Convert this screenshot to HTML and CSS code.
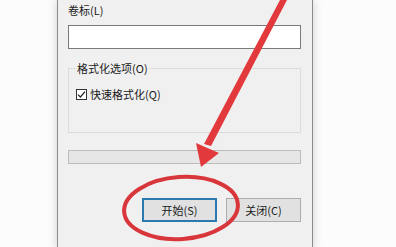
FILE: index.html
```html
<!DOCTYPE html>
<html lang="zh-CN">
<head>
    <meta charset="UTF-8">
    <title>格式化</title>
    <link rel="stylesheet" href="styles.css">
</head>
<body>

<div class="dialog">
    <div class="label">卷标(L)</div>
    <input class="field" type="text">

    <fieldset class="group">
        <legend>格式化选项(O)</legend>
        <label class="check">
            <span class="box">
                <svg width="9" height="9" viewBox="0 0 9 9"><path d="M1 4.6 L3.4 7 L8 1.6" fill="none" stroke="#222" stroke-width="1.2"/></svg>
            </span>
            快速格式化(Q)
        </label>
    </fieldset>

    <div class="progress"></div>

    <div class="buttons">
        <button class="btn default">开始(S)</button>
        <button class="btn">关闭(C)</button>
    </div>
</div>

<!-- red annotation drawn over the dialog -->
<svg class="marks" width="396" height="247" viewBox="0 0 396 247">
    <polygon points="280,0 287,0 211,146 204,144" fill="#e2393d"/>
    <polygon points="196,143 219,153 201,167" fill="#e2393d"/>
    <ellipse cx="181" cy="208" rx="57" ry="31" fill="none" stroke="#d9363b" stroke-width="4" transform="rotate(-4 181 208)"/>
</svg>

</body>
</html>
```

FILE: styles.css
```css
body {
    margin: 0;
    padding: 0;
    width: 396px;
    height: 247px;
    overflow: hidden;
    background: #fcfcfc;
    font-family: "Noto Sans CJK SC", "Noto Sans", sans-serif;
    font-size: 11px;
    color: #1a1a1a;
    position: relative;
}
.dialog {
    margin-left: 57px;
    width: 233px;
    height: 247px;
    padding: 3px 11px 0 10px;
    background: #f0f0f0;
    border-left: 1px solid #8c8c8c;
    border-right: 1px solid #8c8c8c;
    box-shadow: 0 0 9px rgba(0, 0, 0, 0.18);
}
.label {
    line-height: 14px;
    height: 14px;
    margin-bottom: 8px;
}
.field {
    display: block;
    box-sizing: border-box;
    width: 233px;
    height: 24px;
    margin: 0;
    border: 1px solid #7a7a7a;
    background: #fff;
}
.group {
    margin: 12px 0 0;
    padding: 0 7px 0;
    height: 70px;
    border: 1px solid #dcdcdc;
    border-radius: 0;
}
.group legend {
    padding: 0 1px;
    line-height: 14px;
}
.check {
    display: flex;
    align-items: center;
    gap: 3px;
    margin-top: 12px;
    line-height: 14px;
}
.box {
    box-sizing: border-box;
    width: 11px;
    height: 11px;
    border: 1px solid #333;
    background: #fff;
    display: flex;
    align-items: center;
    justify-content: center;
}
.progress {
    box-sizing: border-box;
    margin-top: 17px;
    height: 14px;
    border: 1px solid #bcbcbc;
    background: #e6e6e6;
}
.buttons {
    margin-top: 34px;
    display: flex;
    justify-content: flex-end;
    gap: 9px;
}
.btn {
    box-sizing: border-box;
    width: 75px;
    height: 24px;
    margin: 0;
    padding: 0;
    font-family: inherit;
    font-size: 11px;
    color: #1a1a1a;
    background: #e1e1e1;
    border: 1px solid #adadad;
}
.btn.default {
    border: 2px solid #2a7ab0;
}
.marks {
    position: absolute;
    left: 0;
    top: 0;
}
```
